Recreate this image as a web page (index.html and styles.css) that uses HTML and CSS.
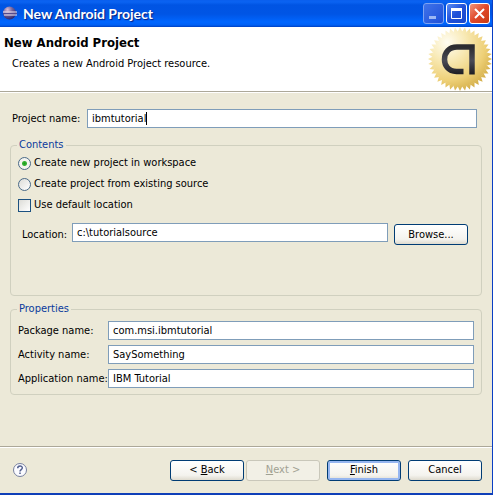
FILE: index.html
```html
<!DOCTYPE html>
<html lang="en">
<head>
<meta charset="utf-8">
<title>New Android Project</title>
<link rel="stylesheet" href="styles.css">
</head>
<body>
<form class="dialog">
  <div class="titlebar">
    <svg class="app-icon" width="16" height="16" viewBox="0 0 16 16" aria-hidden="true">
      <defs>
        <radialGradient id="orb" cx=".35" cy=".25" r=".8">
          <stop offset="0" stop-color="#d9bcd4"/><stop offset=".45" stop-color="#75649d"/><stop offset="1" stop-color="#29246b"/>
        </radialGradient>
      </defs>
      <circle cx="7.5" cy="7" r="6.5" fill="url(#orb)"/>
      <path d="M1 6h14M2 9h13" stroke="#f0e6f2" stroke-width="1"/>
      <path d="M1 7.5h14" stroke="#554b8e" stroke-width="1"/>
    </svg>
    <span class="caption">New Android Project</span>
    <button type="button" class="win min" aria-label="Minimize"><svg width="19" height="19" viewBox="0 0 19 19"><path d="M5 13.5h7" stroke="#9db8f4" stroke-width="3"/></svg></button>
    <button type="button" class="win max" aria-label="Maximize"><svg width="19" height="19" viewBox="0 0 19 19"><path d="M4 5.5h11" stroke="#fff" stroke-width="3"/><path d="M4.500 5v9.500h10V5" fill="none" stroke="#fff"/></svg></button>
    <button type="button" class="win close" aria-label="Close"><svg width="19" height="19" viewBox="0 0 19 19"><path d="M5 5l9 9M14 5l-9 9" stroke="#fff" stroke-width="2"/></svg></button>
  </div>

  <header class="banner">
    <div class="intro">
      <h1>New Android Project</h1>
      <p>Creates a new Android Project resource.</p>
    </div>
    <svg class="seal" width="64" height="64" viewBox="0 0 64 64" aria-hidden="true">
      <defs>
        <radialGradient id="gold" cx=".3" cy=".24" r=".85">
          <stop offset="0" stop-color="#fffdf2"/><stop offset=".35" stop-color="#f8e9b4"/><stop offset=".7" stop-color="#eed077"/><stop offset="1" stop-color="#cfa840"/>
        </radialGradient>
        <linearGradient id="ink" x1="0" y1="0" x2="0" y2="1">
          <stop offset="0" stop-color="#2b2b30"/><stop offset=".5" stop-color="#4a4b55"/><stop offset="1" stop-color="#1d1d22"/>
        </linearGradient>
        <path id="tooth" d="M32 0l2.500 5h-5z"/>
        <g id="teeth">
          <use href="#tooth"/><use href="#tooth" transform="rotate(9 32 32)"/><use href="#tooth" transform="rotate(18 32 32)"/><use href="#tooth" transform="rotate(27 32 32)"/><use href="#tooth" transform="rotate(36 32 32)"/>
        </g>
        <mask id="burst">
          <g fill="#fff">
            <circle cx="32" cy="32" r="27.500"/>
            <use href="#teeth"/><use href="#teeth" transform="rotate(45 32 32)"/><use href="#teeth" transform="rotate(90 32 32)"/><use href="#teeth" transform="rotate(135 32 32)"/>
            <use href="#teeth" transform="rotate(180 32 32)"/><use href="#teeth" transform="rotate(225 32 32)"/><use href="#teeth" transform="rotate(270 32 32)"/><use href="#teeth" transform="rotate(315 32 32)"/>
          </g>
        </mask>
      </defs>
      <rect width="64" height="64" fill="url(#gold)" mask="url(#burst)"/>
      <path d="M35.500 44.500H28.500C20 44.500 16.500 38 16.500 32.500C16.500 25.500 21 20 29 20H44V47.500" fill="none" stroke="url(#ink)" stroke-width="5.500"/>
    </svg>
  </header>

  <main class="content">
    <div class="row project">
      <label for="project">Project name:</label>
      <div class="field"><input type="text" id="project" value="ibmtutorial"><span class="caret"></span></div>
    </div>

    <fieldset class="contents">
      <legend>Contents</legend>
      <label class="choice"><input type="radio" name="source" checked>Create new project in workspace</label>
      <label class="choice"><input type="radio" name="source">Create project from existing source</label>
      <label class="choice"><input type="checkbox">Use default location</label>
      <div class="row location">
        <label for="location">Location:</label>
        <input type="text" id="location" value="c:\tutorialsource">
        <button type="button" class="btn">Browse...</button>
      </div>
    </fieldset>

    <fieldset class="properties">
      <legend>Properties</legend>
      <label for="package">Package name:</label><input type="text" id="package" value="com.msi.ibmtutorial">
      <label for="activity">Activity name:</label><input type="text" id="activity" value="SaySomething">
      <label for="application">Application name:</label><input type="text" id="application" value="IBM Tutorial">
    </fieldset>
  </main>

  <footer class="actions">
    <button type="button" class="help" aria-label="Help">
      <svg width="16" height="16" viewBox="0 0 16 16"><circle cx="8" cy="8" r="6.500" fill="#fbfbff" stroke="#77809f"/><path d="M5.700 6.300C5.700 3.300 10.500 3.400 10.300 6C10.200 7.600 8 7.600 8 9.400M8 10.600v1.500" fill="none" stroke="#53618f" stroke-width="1.500"/></svg>
    </button>
    <div class="pager">
      <button type="button" class="btn">&lt; <u>B</u>ack</button>
      <button type="button" class="btn" disabled><u>N</u>ext &gt;</button>
    </div>
    <button type="submit" class="btn default"><u>F</u>inish</button>
    <button type="button" class="btn">Cancel</button>
  </footer>
</form>
</body>
</html>
```
FILE: styles.css
```css
* { box-sizing: border-box; }

body {
  margin: 0;
  background: #ece9d8;
  color: #000;
  font: 11px/14px "DejaVu Sans Condensed", Tahoma, sans-serif;
}

.dialog {
  display: flex;
  flex-direction: column;
  min-height: 100vh;
  border-right: 1px solid #0a3fc4;
  border-bottom: 2px solid #0f3fb8;
}

.titlebar {
  display: flex;
  align-items: center;
  gap: 2px;
  height: 27px;
  padding: 0 2px;
  background: linear-gradient(#0a5fee 0, #0a63f2 2px, #0054e3 5px, #0055e5 14px, #0066ff 22px, #0060f5 25px, #0040c0 27px);
}

.caption {
  flex: 1;
  padding-left: 3px;
  color: #fff;
  font: bold 14px/18px Lato, sans-serif;
  text-shadow: 1px 1px 1px #0a1f80;
}

.win {
  display: grid;
  place-items: center;
  width: 21px;
  height: 21px;
  padding: 0;
  border: 1px solid #fff;
  border-radius: 3px;
  background: linear-gradient(135deg, #5b8df5, #1f50d8 50%, #1a49cc);
}
.min { border-color: #7ba2f2; background: linear-gradient(135deg, #3f73ea, #1f50d8); }
.close { background: linear-gradient(135deg, #f0947a, #e0492a 50%, #c83a14); }

.banner {
  display: flex;
  justify-content: space-between;
  height: 65px;
  background: #fff;
  border-bottom: 1px solid #aca899;
}
.intro { padding: 8px 4px; }
h1 {
  margin: 0;
  font-size: 13px;
  line-height: 16px;
}
.intro p { margin: 6px 0 0 8px; }

.content {
  flex: 1;
  padding: 16px 10px 0 10px;
  border-top: 1px solid #fff;
}

.row { display: flex; align-items: center; }
.project { gap: 4px; padding: 0 5px 0 2px; }
.project label { width: 71px; white-space: nowrap; }
.field { position: relative; flex: 1; }

input[type="text"] {
  display: block;
  flex: 1;
  width: 100%;
  min-width: 0;
  height: 19px;
  margin: 0;
  padding: 0 4px;
  border: 1px solid #7f9db9;
  background: #fff;
  color: #000;
  font: inherit;
}
.caret {
  position: absolute;
  top: 3px;
  left: 59px;
  width: 1px;
  height: 13px;
  background: #000;
}

fieldset {
  min-width: 0;
  margin: 10px 0 0;
  padding: 0 7px;
  border: 1px solid #d0d0bf;
  border-radius: 4px;
}
legend {
  padding: 0 2px;
  margin-left: -1px;
  color: #0a3a9c;
  line-height: 14px;
}

.contents { padding-bottom: 50px; }
.choice {
  display: flex;
  align-items: center;
  gap: 3px;
  height: 14px;
  margin: 4px 0 7px;
}
.choice + .choice { margin-top: 0; }

input[type="radio"], input[type="checkbox"] {
  appearance: none;
  width: 13px;
  height: 13px;
  margin: 0;
  border: 1px solid #1c5180;
  background: linear-gradient(135deg, #dcdcd7, #fff);
}
input[type="radio"] { border-radius: 50%; border-color: #4a6a88; }
input[type="radio"]:checked {
  background: radial-gradient(circle, #1f9a1f 0, #35b435 2px, #f4f4f0 3px);
}

.location { align-items: flex-start; padding: 4px 6px 0 4px; }
.location label { width: 50px; padding-top: 5px; }
.location .btn { margin: 1px 0 0 6px; }

.btn {
  width: 74px;
  height: 21px;
  padding: 0;
  border: 1px solid #003c74;
  border-radius: 3px;
  background: linear-gradient(#fff, #f4f3ee 75%, #dfdbcf);
  color: #000;
  font: inherit;
}
.btn:disabled {
  border-color: #c9c7ba;
  background: #f2f0e6;
  color: #a1a192;
}
.default { box-shadow: inset 0 0 0 2px #96b6f0; }

.properties {
  display: grid;
  grid-template-columns: 86px 1fr;
  align-items: center;
  gap: 5px 4px;
  margin-top: 6px;
  padding: 5px 7px 6px;
}
.properties label { white-space: nowrap; }

.actions {
  display: flex;
  align-items: center;
  gap: 7px;
  height: 47px;
  padding: 0 10px 0 12px;
  border-top: 1px solid #aca899;
  box-shadow: inset 0 1px #fff;
}
.help {
  display: grid;
  margin-right: auto;
  padding: 0;
  border: 0;
  background: none;
}
.pager { display: flex; gap: 2px; }
```
